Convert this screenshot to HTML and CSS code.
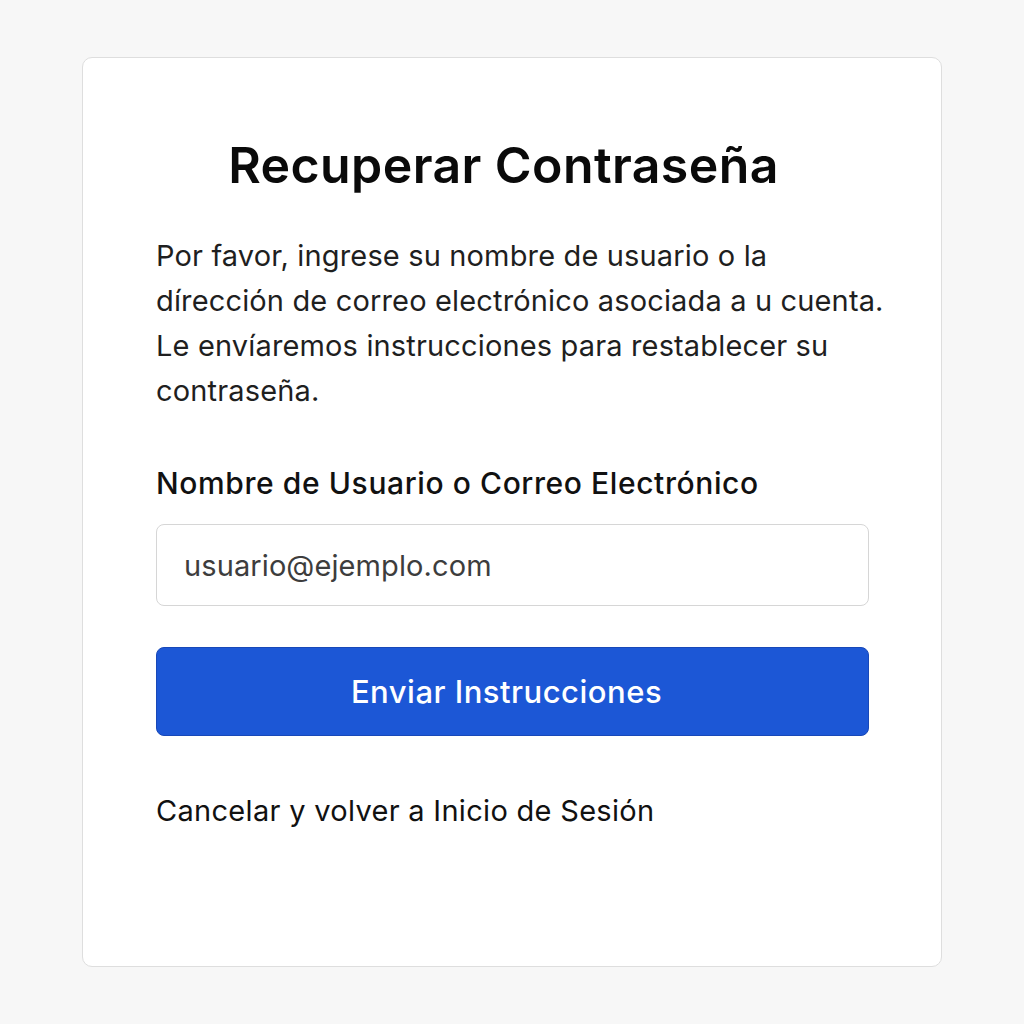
FILE: index.html
```html
<!DOCTYPE html>
<html lang="es">
<head>
<meta charset="utf-8">
<title>Recuperar Contraseña</title>
<link rel="stylesheet" href="styles.css">
</head>
<body>
<main class="card">
  <h1 class="title">Recuperar Contraseña</h1>
  <p class="intro">Por favor, ingrese su nombre de usuario o la<br>dírección de correo electrónico asociada a u cuenta.<br>Le envíaremos instrucciones para restablecer su<br>contraseña.</p>
  <form class="form">
    <label class="label" for="user">Nombre de Usuario o Correo Electrónico</label>
    <input class="input" id="user" type="text" placeholder="usuario@ejemplo.com">
    <button class="button" type="button">Enviar Instrucciones</button>
  </form>
  <a class="cancel" href="#">Cancelar y volver a Inicio de Sesión</a>
</main>
</body>
</html>
```
FILE: styles.css
```css
html, body {
  margin: 0;
  padding: 0;
}
body {
  background: #f7f7f7;
  font-family: Inter, "Noto Sans", "Liberation Sans", sans-serif;
  color: #1a1a1a;
  padding: 57px 82px 0 82px;
  height: 1024px;
  box-sizing: border-box;
}
.card {
  box-sizing: border-box;
  width: 860px;
  height: 910px;
  background: #ffffff;
  border: 1px solid #dedede;
  border-radius: 10px;
  padding: 75px 72px 0 73px;
  display: flex;
  flex-direction: column;
}
.title {
  margin: 0;
  font-size: 50px;
  font-weight: 600;
  line-height: 64px;
  text-align: center;
  color: #0a0a0a;
  letter-spacing: 0.4px;
  padding-right: 18px;
}
.intro {
  margin: 36px -40px 0 0;
  font-size: 29px;
  line-height: 45px;
  letter-spacing: 0.15px;
  color: #1f1f1f;
  white-space: nowrap;
}
.form {
  display: flex;
  flex-direction: column;
  margin-top: 50px;
}
.label {
  font-size: 30px;
  font-weight: 500;
  line-height: 40px;
  letter-spacing: 0.6px;
  color: #111;
}
.input {
  margin-top: 21px;
  height: 82px;
  box-sizing: border-box;
  border: 1px solid #d6d6d6;
  border-radius: 8px;
  padding: 0 27px;
  font-family: inherit;
  font-size: 29px;
  letter-spacing: 0.1px;
  color: #333;
  outline: none;
  background: #fff;
}
.input::placeholder {
  color: #3d3d3d;
}
.button {
  margin-top: 41px;
  height: 89px;
  padding: 0 12px 0 0;
  border: 1px solid #1848b8;
  border-radius: 8px;
  background: #1c57d6;
  color: #fff;
  font-family: inherit;
  font-size: 31px;
  font-weight: 500;
  letter-spacing: 0.5px;
  cursor: pointer;
}
.cancel {
  margin-top: 55px;
  font-size: 29px;
  line-height: 40px;
  letter-spacing: 0.3px;
  color: #111;
  text-decoration: none;
  align-self: flex-start;
}
```
